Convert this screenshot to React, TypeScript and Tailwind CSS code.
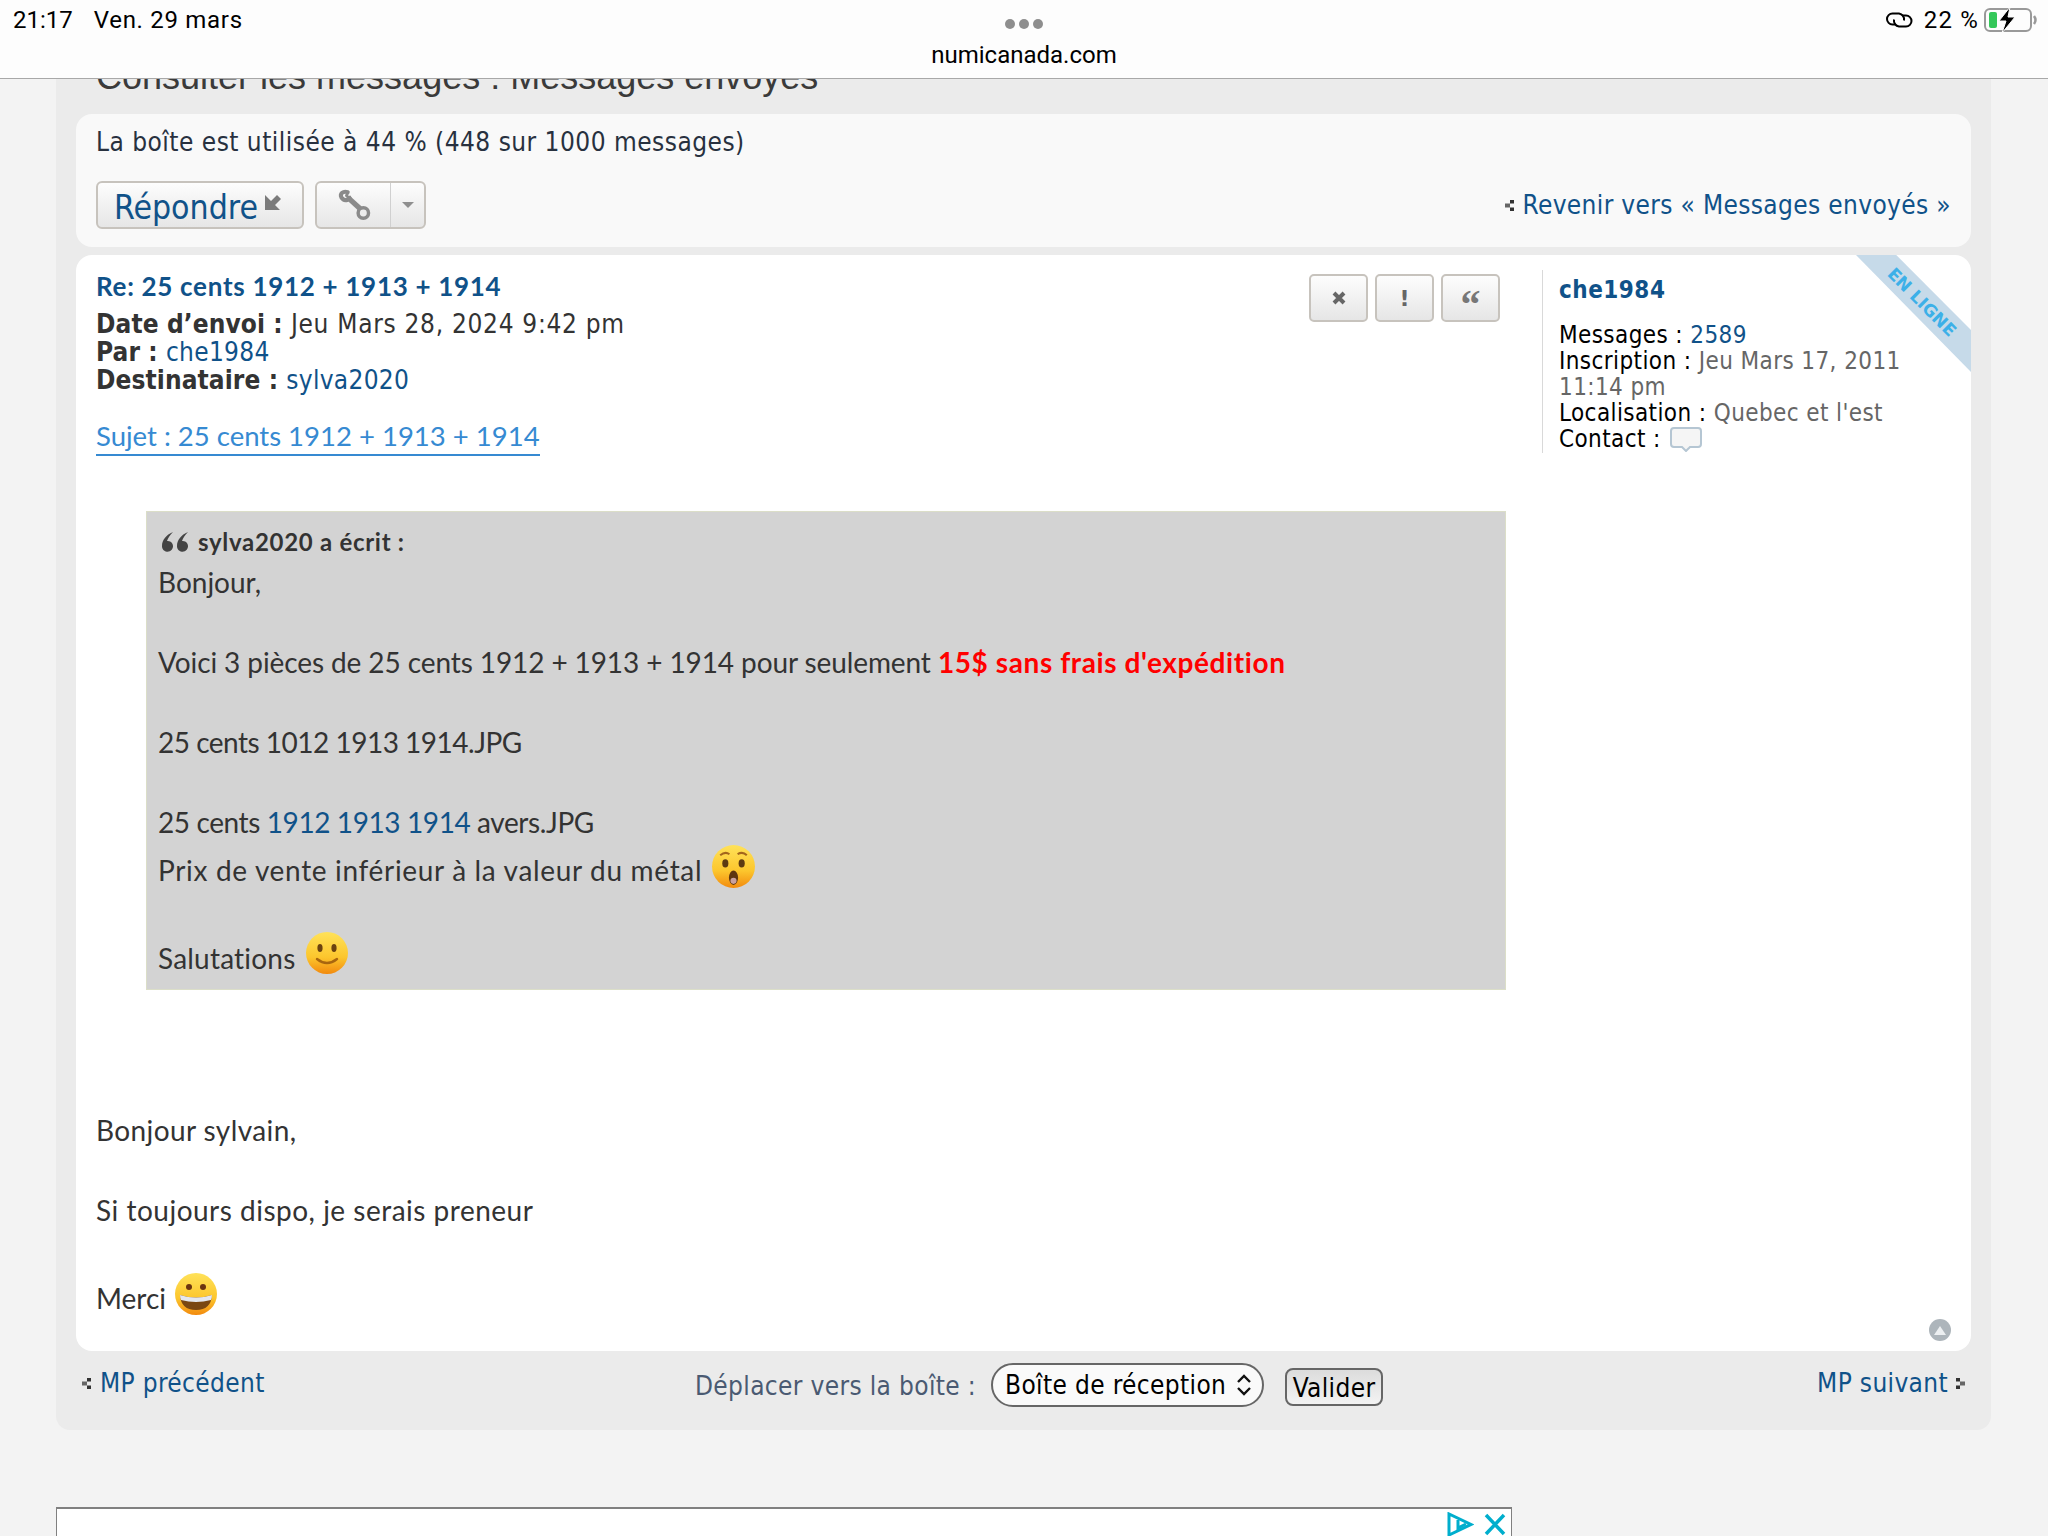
import React from "react"

const verdana = "font-['DejaVu_Sans_Condensed','DejaVu_Sans',sans-serif]"
const trebuchet = "font-['Lato','Open_Sans',sans-serif]"

function Marker({ flip = false }: { flip?: boolean }) {
  return (
    <svg width="9" height="11" viewBox="0 0 9 11" className={flip ? "rotate-180" : ""}>
      <rect x="5" y="0" width="4" height="3.5" fill="#333" />
      <rect x="0" y="3.5" width="5" height="4" fill="#666" />
      <rect x="5" y="7.5" width="4" height="3.5" fill="#333" />
    </svg>
  )
}

function Emoji({ kind, size }: { kind: "wow" | "smile" | "grin"; size: number }) {
  const id = "g-" + kind
  return (
    <svg width={size} height={size} viewBox="0 0 44 44" className="inline-block">
      <defs>
        <linearGradient id={id} x1="0" y1="0" x2="0" y2="1">
          <stop offset="0" stopColor="#ffe259" />
          <stop offset="0.6" stopColor="#fcc62d" />
          <stop offset="1" stopColor="#f28a0e" />
        </linearGradient>
      </defs>
      <circle cx="22" cy="22" r="21" fill={`url(#${id})`} />
      {kind === "wow" && (
        <>
          <path d="M9 11q5-4 9-1M26 10q5-3 9 1" stroke="#a3661c" strokeWidth="2" fill="none" />
          <ellipse cx="14" cy="19" rx="3" ry="4" fill="#5d3a12" />
          <ellipse cx="30" cy="19" rx="3" ry="4" fill="#5d3a12" />
          <ellipse cx="22" cy="33" rx="4.5" ry="7" fill="#5e3510" />
          <ellipse cx="22" cy="36" rx="3" ry="3" fill="#c9a0a0" />
        </>
      )}
      {kind === "smile" && (
        <>
          <ellipse cx="15" cy="17" rx="2.6" ry="4" fill="#6b4210" />
          <ellipse cx="29" cy="17" rx="2.6" ry="4" fill="#6b4210" />
          <path d="M12 28q10 8 20 0" stroke="#a8660f" strokeWidth="2.4" fill="none" strokeLinecap="round" />
        </>
      )}
      {kind === "grin" && (
        <>
          <circle cx="15" cy="15" r="3" fill="#6b3410" />
          <circle cx="29" cy="15" r="3" fill="#6b3410" />
          <path d="M6 23q16 5 32 0q-1 15-16 15t-16-15z" fill="#7a4712" />
          <path d="M6 23q16 5 32 0q0 3-1 5q-15 4-30 0q-1-2-1-5z" fill="#e4e7ee" />
        </>
      )}
    </svg>
  )
}

function PostButton({ children }: { children: React.ReactNode }) {
  return (
    <div className="w-[59px] h-[48px] rounded-[5px] border-2 border-[#c7c3bd] bg-gradient-to-b from-[#fdfdfd] to-[#e6e6e6] flex items-center justify-center">
      {children}
    </div>
  )
}

function Info({ label, children }: { label: string; children: React.ReactNode }) {
  return (
    <div>
      <span className="text-black">{label} : </span>
      {children}
    </div>
  )
}

export default function App() {
  return (
    <div className="w-[2048px] h-[1536px] overflow-hidden bg-[#f3f3f3] flex flex-col relative">
      {/* barre safari */}
      <div className="h-[79px] shrink-0 bg-[#fdfdfd] border-b border-[#a8a8a8] relative z-10 font-['Roboto',sans-serif] text-[24px] text-black flex justify-between pl-[13px] pr-[10px] pt-[4px]">
        <div className="flex gap-[21px] leading-[32px]">
          <span>21:17</span>
          <span className="tracking-[0.7px]">Ven. 29 mars</span>
        </div>
        <div className="flex flex-col items-center absolute left-0 right-0 top-[19px]">
          <div className="flex gap-[4px]">
            <span className="w-[10px] h-[10px] rounded-full bg-[#8e8e8e]" />
            <span className="w-[10px] h-[10px] rounded-full bg-[#8e8e8e]" />
            <span className="w-[10px] h-[10px] rounded-full bg-[#8e8e8e]" />
          </div>
          <div className="mt-[10px] leading-[32px]">numicanada.com</div>
        </div>
        <div className="flex items-center h-[32px]">
          <svg width="30" height="17" viewBox="0 0 30 17" fill="none" stroke="#000" strokeWidth="2">
            <path d="M19 8.500A6 6 0 0 0 14 1.500H7.500a5.500 5.500 0 0 0 0 11H11" />
            <path d="M9 7.500A6 6 0 0 0 14 14.500h7a5.500 5.500 0 0 0 0-11H17" />
          </svg>
          <span className="ml-[9px] tracking-[1.2px]">22 %</span>
          <svg width="54" height="26" viewBox="0 0 54 26" className="ml-[5px]">
            <rect x="1" y="2" width="46" height="22" rx="5" fill="none" stroke="#999" strokeWidth="2" />
            <rect x="5" y="5" width="8" height="16" rx="2" fill="#34c759" />
            <path d="M50 9q3 4 0 8" stroke="#999" strokeWidth="2.500" fill="none" />
            <path d="M26 0 15 14h7l-4 12 13-16h-7z" fill="#000" stroke="#fdfdfd" strokeWidth="1" />
          </svg>
        </div>
      </div>

      <div className="mx-[56px] w-[1935px] h-[1351px] shrink-0 bg-[#ebebeb] rounded-b-[14px] px-[20px] overflow-hidden">
        <div className="h-[35px] overflow-hidden">
          <div className="-mt-[24px] pl-[20px] font-['Liberation_Sans',sans-serif] text-[36px] leading-[44px] text-[#3a3a3a]">
            Consulter les messages : Messages envoyés
          </div>
        </div>

        {/* boite */}
        <div className={`h-[133px] bg-[#f9f9f9] rounded-[16px] px-[20px] pt-[12px] ${verdana}`}>
          <div className="text-[26px] leading-[32px] tracking-[0.48px] text-[#28313f]">La boîte est utilisée à 44 % (448 sur 1000 messages)</div>
          <div className="flex items-center mt-[23px]">
            <div className="w-[208px] h-[48px] rounded-[6px] border-2 border-[#c7c3bd] bg-gradient-to-b from-[#fdfdfd] to-[#e6e6e6] flex items-center pl-[16px] text-[#105289] text-[33.500px] leading-[40px]">
              <span className="mt-[6px]">Répondre</span>
              <svg width="20" height="20" viewBox="0 0 20 20" className="ml-[5px] -mt-[6px]">
                <path d="M2 3v15h15l-5-5 6-6-4-4-6 6z" fill="#7b7b7b" />
              </svg>
            </div>
            <div className="ml-[11px] w-[111px] h-[48px] rounded-[6px] border-2 border-[#c7c3bd] bg-gradient-to-b from-[#fdfdfd] to-[#e6e6e6] flex">
              <div className="w-[74px] border-r border-[#d0d0d0] flex items-center justify-center">
                <svg width="37" height="37" viewBox="0 0 32 32" fill="none" stroke="#8a8a8a">
                  <path d="M11 4.500C7 3 4 6 5.500 9c1.500 2.500 4 2.500 5.500 2" strokeWidth="3.500" strokeLinecap="round" />
                  <path d="M11 4.500l-1 3 2 2 2-1" strokeWidth="2.500" />
                  <path d="M11 9l11 10" strokeWidth="4.500" />
                  <circle cx="24.500" cy="22.500" r="4.500" strokeWidth="3" fill="#ececec" />
                </svg>
              </div>
              <div className="flex-1 flex items-center justify-center">
                <span className="w-0 h-0 border-x-[6px] border-x-transparent border-t-[6px] border-t-[#8f8f8f]" />
              </div>
            </div>
            <div className="ml-auto flex items-center gap-[8px] text-[#105289] text-[26px] leading-[32px] tracking-[0.35px]">
              <Marker />
              <span>Revenir vers « Messages envoyés »</span>
            </div>
          </div>
        </div>

        {/* message */}
        <div className="mt-[8px] h-[1096px] bg-white rounded-[16px] relative overflow-hidden">
          <div className="absolute right-0 top-0 w-[115px] h-[117px] bg-[#c6dae9] [clip-path:polygon(0_0,35%_0,100%_64%,100%_100%)]" />
          <div className="absolute left-[1791px] top-[39px] w-[110px] text-center rotate-45 font-['DejaVu_Sans',sans-serif] font-bold text-[17px] leading-[16px] whitespace-nowrap text-[#3cb0e8]">
            EN LIGNE
          </div>

          <div className="flex pl-[20px] pt-[15px]">
            <div className="w-[1447px] shrink-0">
              <div className={`${trebuchet} font-bold text-[26px] leading-[32px] tracking-[0.7px] text-[#105289]`}>Re: 25 cents 1912 + 1913 + 1914</div>
              <div className={`${verdana} text-[26px] leading-[28px] tracking-[0.7px] text-[#333] mt-[8px]`}>
                <div><b className="tracking-[0.1px]">Date d’envoi :</b> Jeu Mars 28, 2024 9:42 pm</div>
                <div><b className="tracking-[0.1px]">Par :</b> <span className="text-[#105289] tracking-[0.3px]">che1984</span></div>
                <div><b className="tracking-[0.1px]">Destinataire :</b> <span className="text-[#105289] tracking-[0.3px]">sylva2020</span></div>
              </div>
              <div className={`${trebuchet} inline-block mt-[24px] text-[27.500px] leading-[36px] text-[#368ad2] border-b-2 border-[#368ad2]`}>
                Sujet : 25 cents 1912 + 1913 + 1914
              </div>
            </div>

            <div className="w-[191px] shrink-0 flex gap-[7px] -ml-[234px] mt-[4px] h-[48px]">
              <PostButton>
                <svg width="16" height="16" viewBox="0 0 16 16"><path d="M3 3l10 10M13 3L3 13" stroke="#666" strokeWidth="4" /></svg>
              </PostButton>
              <PostButton>
                <span className="font-['DejaVu_Sans',sans-serif] font-bold text-[22px] text-[#666]">!</span>
              </PostButton>
              <PostButton>
                <span className="font-['Liberation_Serif',serif] font-bold text-[40px] leading-[40px] mt-[14px] text-[#777]">“</span>
              </PostButton>
            </div>

            <div className={`ml-[42px] w-[400px] h-[183px] border-l border-[#d9d9d9] pl-[16px] ${verdana} text-[24px] leading-[26px] tracking-[0.4px] text-[#666]`}>
              <div className="font-bold text-[#105289] leading-[28px] mb-[18px] mt-[6px] text-[24px] tracking-[0.5px]">che1984</div>
              <Info label="Messages"><span className="text-[#105289]">2589</span></Info>
              <div className="w-[370px]"><Info label="Inscription">Jeu Mars 17, 2011 11:14 pm</Info></div>
              <Info label="Localisation">Quebec et l'est</Info>
              <div className="flex items-center">
                <span className="text-black">Contact : </span>
                <svg width="34" height="26" viewBox="0 0 34 26" className="ml-[8px]">
                  <path d="M5 2h24a3 3 0 0 1 3 3v13a3 3 0 0 1-3 3h-8l-4 4-4-4H5a3 3 0 0 1-3-3V5a3 3 0 0 1 3-3z" fill="#f5f5f5" stroke="#b5c6d3" strokeWidth="2" />
                </svg>
              </div>
            </div>
          </div>

          {/* citation */}
          <div className={`${trebuchet} text-[28px] leading-[40px] text-[#333]`}>
            <div className="ml-[70px] mt-[55px] w-[1360px] h-[479px] bg-[#d3d3d3] border border-[#dbdec8] pl-[11px] pt-[14px] text-[#333]">
              <div className="flex items-center h-[32px] font-bold text-[24px] leading-[32px] tracking-[0.7px] pl-[2px]">
                <svg width="30" height="22" viewBox="0 0 30 22" fill="#444" className="mr-[8px]">
                  <path d="M13 1C6 4 2 9 2 15a5.500 5.500 0 1 0 9-4c-1-1-3-1-4-1 1-3 3-6 6-9zM28 1c-7 3-11 8-11 14a5.500 5.500 0 1 0 9-4c-1-1-3-1-4-1 1-3 3-6 6-9z" />
                </svg>
                sylva2020 a écrit :
              </div>
              <div className="mt-[4px]">Bonjour,</div>
              <div className="mt-[40px] tracking-[-0.1px]">
                Voici 3 pièces de 25 cents 1912 + 1913 + 1914 pour seulement{" "}
                <b className="text-[#ff0000] tracking-[0.6px]">15$ sans frais d'expédition</b>
              </div>
              <div className="mt-[40px] tracking-[-0.5px]">25 cents 1012 1913 1914.JPG</div>
              <div className="mt-[40px] tracking-[-0.4px]">25 cents <span className="text-[#105289]">1912 1913 1914</span> avers.JPG</div>
              <div className="flex items-center h-[48px] gap-[9px] mt-[4px] tracking-[0.67px]">
                <span>Prix de vente inférieur à la valeur du métal</span>
                <span className="-mt-[9px]"><Emoji kind="wow" size={45} /></span>
              </div>
              <div className="flex items-center h-[48px] gap-[10px] mt-[40px] tracking-[0.2px]">
                <span>Salutations</span>
                <span className="-mt-[11px]"><Emoji kind="smile" size={44} /></span>
              </div>
            </div>

            <div className="pl-[20px] mt-[120px]">
              <div className="tracking-[0.4px]">Bonjour sylvain,</div>
              <div className="mt-[40px] tracking-[0.5px]">Si toujours dispo, je serais preneur</div>
              <div className="flex items-center h-[48px] gap-[8px] mt-[44px]">
                <span>Merci</span>
                <span className="-mt-[10px]"><Emoji kind="grin" size={44} /></span>
              </div>
            </div>
          </div>

          <div className="absolute right-[20px] bottom-[10px] w-[22px] h-[22px] rounded-full bg-[#adb5bb] flex items-center justify-center">
            <span className="w-0 h-0 border-x-[6px] border-x-transparent border-b-[9px] border-b-[#eceff1]" />
          </div>
        </div>

        {/* bas */}
        <div className={`h-[79px] flex items-start relative ${verdana} text-[26px] leading-[32px] tracking-[0.35px]`}>
          <div className="flex items-center gap-[9px] mt-[16px] ml-[6px] text-[#105289]">
            <Marker />
            <span>MP précédent</span>
          </div>
          <div className="absolute left-[619px] top-[12px] flex items-center text-[#4a5a72]">
            <span className="mt-[2px]">Déplacer vers la boîte :</span>
            <div className="ml-[15px] w-[273px] h-[44px] rounded-[22px] border-2 border-[#666] bg-[#fafafa] flex items-center pl-[12px] text-black">
              Boîte de réception
              <svg width="16" height="24" viewBox="0 0 16 24" fill="none" stroke="#111" strokeWidth="2.4" className="ml-[10px]">
                <path d="M2 9l6-6 6 6M2 15l6 6 6-6" />
              </svg>
            </div>
            <div className="ml-[21px] mt-[3px] w-[98px] h-[38px] rounded-[8px] border-2 border-[#666] bg-gradient-to-b from-[#dcdcdc] to-[#f3f3f3] flex items-center justify-center text-black">
              <span className="mt-[2px]">Valider</span>
            </div>
          </div>
          <div className="ml-auto mt-[16px] mr-[6px] flex items-center gap-[8px] text-[#105289]">
            <span>MP suivant</span>
            <Marker flip />
          </div>
        </div>
      </div>

      {/* pub */}
      <div className="ml-[56px] mt-[77px] w-[1456px] flex-1 bg-white border-t-2 border-x border-[#808080] flex justify-end items-start pt-[3px] pr-[5px] gap-[10px]">
        <svg width="28" height="26" viewBox="0 0 28 26" fill="none" stroke="#00aecd" strokeWidth="3">
          <path d="M3 2v21l22-10.500z" />
          <path d="M12 8v8l8-4" />
        </svg>
        <svg width="22" height="24" viewBox="0 0 22 24" stroke="#00aecd" strokeWidth="3.500">
          <path d="M2 3l18 19M20 3L2 22" />
        </svg>
      </div>
    </div>
  )
}
